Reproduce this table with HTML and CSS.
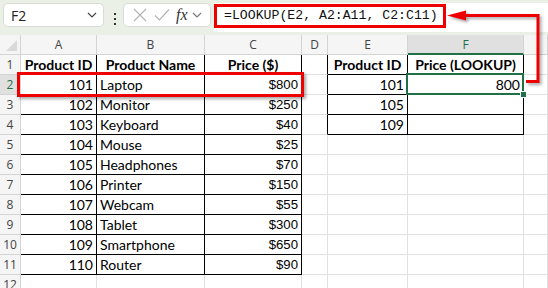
FILE: index.html
```html
<!DOCTYPE html>
<html>
<head>
<meta charset="utf-8">
<link rel="stylesheet" href="styles.css">
</head>
<body>
<div class="app">
  <div class="fbar">
    <div class="namebox">
      <span class="nb-text">F2</span>
      <svg class="chev" width="10" height="6" viewBox="0 0 10 6"><path d="M1 1l4 4 4-4" fill="none" stroke="#444" stroke-width="1.2"/></svg>
    </div>
    <svg class="dots" width="4" height="12" viewBox="0 0 4 12"><rect x="1" y="0" width="2" height="2" fill="#333"/><rect x="1" y="5" width="2" height="2" fill="#333"/><rect x="1" y="10" width="2" height="2" fill="#333"/></svg>
    <div class="fxbox">
      <svg class="ico" width="14" height="14" viewBox="0 0 14 14"><path d="M1 1l12 12M13 1L1 13" stroke="#b4b4b4" stroke-width="1.2" fill="none"/></svg>
      <svg class="ico chk" width="16" height="14" viewBox="0 0 16 14"><path d="M1 7.5l4.5 4.5L15 1.5" stroke="#b4b4b4" stroke-width="1.2" fill="none"/></svg>
      <span class="fx">fx</span>
      <svg class="chev2" width="10" height="6" viewBox="0 0 10 6"><path d="M1 1l4 4 4-4" fill="none" stroke="#777" stroke-width="1.2"/></svg>
    </div>
    <div class="formula"><span class="ftext">=LOOKUP(E2, A2:A11, C2:C11)</span></div>
  </div>

  <div class="sheet">
    <div class="c corner"><svg width="21" height="20" viewBox="0 0 21 20"><path d="M6 16H17V5Z" fill="#d9d9d9"/></svg></div>
    <div class="c ch">A</div><div class="c ch">B</div><div class="c ch">C</div><div class="c ch">D</div><div class="c ch">E</div><div class="c ch chsel">F</div><div class="c ch"></div>

    <div class="c rh">1</div>
    <div class="c t b">Product ID</div><div class="c t b">Product Name</div><div class="c t b">Price ($)</div><div class="c tr"></div><div class="c t b">Product ID</div><div class="c t b">Price (LOOKUP)</div><div class="c"></div>

    <div class="c rh rhsel">2</div>
    <div class="c t r">101</div><div class="c t">Laptop</div><div class="c t r p">$800</div><div class="c tr"></div><div class="c t r">101</div><div class="c t r sel">800</div><div class="c"></div>

    <div class="c rh">3</div>
    <div class="c t r">102</div><div class="c t">Monitor</div><div class="c t r p">$250</div><div class="c tr"></div><div class="c t r">105</div><div class="c t"></div><div class="c"></div>

    <div class="c rh">4</div>
    <div class="c t r">103</div><div class="c t">Keyboard</div><div class="c t r p">$40</div><div class="c tr"></div><div class="c t r">109</div><div class="c t"></div><div class="c"></div>

    <div class="c rh">5</div>
    <div class="c t r">104</div><div class="c t">Mouse</div><div class="c t r p">$25</div><div class="c"></div><div class="c"></div><div class="c"></div><div class="c"></div>

    <div class="c rh">6</div>
    <div class="c t r">105</div><div class="c t">Headphones</div><div class="c t r p">$70</div><div class="c"></div><div class="c"></div><div class="c"></div><div class="c"></div>

    <div class="c rh">7</div>
    <div class="c t r">106</div><div class="c t">Printer</div><div class="c t r p">$150</div><div class="c"></div><div class="c"></div><div class="c"></div><div class="c"></div>

    <div class="c rh">8</div>
    <div class="c t r">107</div><div class="c t">Webcam</div><div class="c t r p">$55</div><div class="c"></div><div class="c"></div><div class="c"></div><div class="c"></div>

    <div class="c rh">9</div>
    <div class="c t r">108</div><div class="c t">Tablet</div><div class="c t r p">$300</div><div class="c"></div><div class="c"></div><div class="c"></div><div class="c"></div>

    <div class="c rh">10</div>
    <div class="c t r">109</div><div class="c t">Smartphone</div><div class="c t r p">$650</div><div class="c"></div><div class="c"></div><div class="c"></div><div class="c"></div>

    <div class="c rh">11</div>
    <div class="c t r">110</div><div class="c t">Router</div><div class="c t r p">$90</div><div class="c"></div><div class="c"></div><div class="c"></div><div class="c"></div>

    <div class="c rh">12</div>
    <div class="c"></div><div class="c"></div><div class="c"></div><div class="c"></div><div class="c"></div><div class="c"></div><div class="c"></div>
  </div>

  <div class="hl-row"></div>
  <svg class="arrow" width="548" height="288" viewBox="0 0 548 288">
    <g class="arrow-g">
      <polyline points="462,15.5 538,15.5 538,81.5 526,81.5" fill="none" stroke="#ee0000" stroke-width="3"/>
      <polygon points="447,15.5 466,10.5 466,20.5" fill="#ee0000"/>
    </g>
  </svg>
</div>
</body>
</html>
```

FILE: styles.css
```css
html, body {
  margin: 0;
  padding: 0;
  background: #fff;
}
.app {
  position: relative;
  width: 548px;
  height: 288px;
  overflow: hidden;
  font-family: "Lato", "Liberation Sans", sans-serif;
}
.fbar {
  display: flex;
  align-items: flex-start;
  height: 35px;
  box-sizing: border-box;
  padding-top: 3px;
  background: #eaf0e6;
}
.namebox {
  margin-left: 3px;
  width: 101px;
  height: 24px;
  box-sizing: border-box;
  background: #fff;
  border: 1px solid #d8dcd6;
  border-radius: 5px;
  display: flex;
  align-items: center;
  justify-content: space-between;
  padding: 0 6px 0 7px;
}
.nb-text {
  font: 14px "Open Sans", "Liberation Sans", sans-serif;
  color: #222;
}
.dots {
  margin: 10px 0 0 9px;
}
.fxbox {
  margin-left: 6px;
  width: 88px;
  height: 24px;
  box-sizing: border-box;
  background: #fff;
  border: 1px solid #d8dcd6;
  border-radius: 5px;
  display: flex;
  align-items: center;
  padding-left: 9px;
}
.ico { flex: none; }
.chk { margin-left: 7px; }
.fx {
  margin-left: 6px;
  font: italic 16px "Liberation Serif", "DejaVu Serif", serif;
  color: #333;
  line-height: 16px;
}
.chev2 { margin-left: 4px; }
.formula {
  margin-left: 3px;
  flex: 1;
  height: 29px;
  box-sizing: border-box;
  background: #fff;
}
.ftext {
  display: inline-block;
  box-sizing: border-box;
  height: 24px;
  border: 3px solid #ee0000;
  padding: 0 5px 0 7px;
  font: 13.2px "Liberation Mono", "DejaVu Sans Mono", monospace;
  line-height: 18px;
  color: #111;
  white-space: nowrap;
}
.sheet {
  display: grid;
  grid-template-columns: 21px 76px 108px 97px 26px 80px 116px 24px;
  grid-auto-rows: 20px;
}
.c {
  box-sizing: border-box;
  border-right: 1px solid #e1e1e1;
  border-bottom: 1px solid #e1e1e1;
  font-size: 14px;
  line-height: 19px;
  padding: 0 3px;
  white-space: nowrap;
  overflow: hidden;
  color: #000;
}
.corner {
  padding: 0;
  background: #f5f5f5;
  border-right-color: #d4d4d4;
  border-bottom-color: #d4d4d4;
}
.corner svg { display: block; }
.ch {
  background: #f5f5f5;
  border-right-color: #d4d4d4;
  border-bottom-color: #d4d4d4;
  text-align: center;
  font: 12px "Open Sans", "Liberation Sans", sans-serif;
  line-height: 19px;
  color: #444;
}
.chsel {
  background: #e0e0e0;
  border-bottom: 2px solid #1e7145;
  color: #1e7145;
}
.rh {
  background: #f5f5f5;
  border-right-color: #d4d4d4;
  border-bottom-color: #d4d4d4;
  text-align: center;
  padding: 0;
  font: 12px "Open Sans", "Liberation Sans", sans-serif;
  line-height: 19px;
  color: #444;
}
.rhsel {
  background: #e0e0e0;
  color: #1e7145;
}
.t {
  border-right-color: #000;
  border-bottom-color: #000;
}
.tr {
  border-right-color: #000;
}
.b {
  font-weight: 700;
  text-align: center;
}
.r { text-align: right; }
.p {
  font: 13.2px "Liberation Sans", Arial, sans-serif;
  line-height: 20px;
}
.sel {
  position: relative;
  overflow: visible;
}
.sel::after {
  content: "";
  position: absolute;
  left: -2px;
  top: -2px;
  right: -1px;
  bottom: -1px;
  border: 2px solid #1e7145;
}
.sel::before {
  content: "";
  position: absolute;
  right: -4px;
  bottom: -4px;
  width: 5px;
  height: 5px;
  background: #1e7145;
  border: 1px solid #fff;
  z-index: 2;
}
.hl-row {
  position: absolute;
  left: 17px;
  top: 72px;
  width: 287px;
  height: 25px;
  box-sizing: border-box;
  border: 3px solid #ee0000;
  box-shadow: 2px 2px 3px rgba(0, 0, 0, 0.35);
}
.arrow {
  position: absolute;
  left: 0;
  top: 0;
  pointer-events: none;
}
.arrow-g {
  filter: drop-shadow(2px 2px 1.5px rgba(0, 0, 0, 0.35));
}
```
